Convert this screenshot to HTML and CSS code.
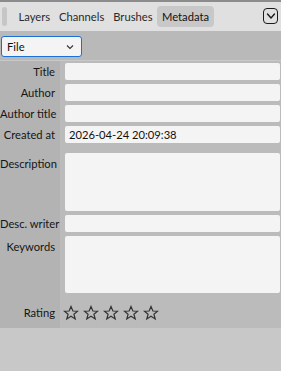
FILE: index.html
```html
<!DOCTYPE html>
<html lang="en">
<head>
<meta charset="UTF-8">
<title>Metadata</title>
<meta name="viewport" content="width=device-width, initial-scale=1.0">
<link rel="stylesheet" href="styles.css">
</head>
<body>

<div class="panel">
  <header class="tabbar">
    <span class="grip"></span>
    <nav class="tabs">
      <span class="tab">Layers</span>
      <span class="tab">Channels</span>
      <span class="tab">Brushes</span>
      <span class="tab active">Metadata</span>
    </nav>
    <button class="menu-btn" aria-label="Menu">
      <svg width="10" height="8" viewBox="0 0 10 8"><path d="M1.5 2 L5 6 L8.5 2" fill="none" stroke="#1a1a1a" stroke-width="1.4" stroke-linecap="round" stroke-linejoin="round"/></svg>
    </button>
  </header>

  <div class="toolbar">
    <div class="select">
      <span>File</span>
      <svg width="8" height="6" viewBox="0 0 8 6"><path d="M1 1.5 L4 4.5 L7 1.5" fill="none" stroke="#333" stroke-width="1.1"/></svg>
    </div>
  </div>

  <main class="fields">
    <label class="lbl">Title</label>
    <div class="cell"><div class="input"></div></div>

    <label class="lbl">Author</label>
    <div class="cell"><div class="input"></div></div>

    <label class="lbl">Author title</label>
    <div class="cell"><div class="input"></div></div>

    <label class="lbl">Created at</label>
    <div class="cell"><div class="input">2026-04-24 20:09:38</div></div>

    <label class="lbl top tall">Description</label>
    <div class="cell tall"><div class="input area"></div></div>

    <label class="lbl">Desc. writer</label>
    <div class="cell"><div class="input"></div></div>

    <label class="lbl top">Keywords</label>
    <div class="cell"><div class="input area kw"></div></div>

    <label class="lbl rating-lbl">Rating</label>
    <div class="cell stars">
      <svg class="star" viewBox="0 0 16 16"><path d="M8 1.5 L9.9 6 L14.6 6.2 L10.9 9.2 L12.2 13.9 L8 11.2 L3.8 13.9 L5.1 9.2 L1.4 6.2 L6.1 6 Z"/></svg>
      <svg class="star" viewBox="0 0 16 16"><path d="M8 1.5 L9.9 6 L14.6 6.2 L10.9 9.2 L12.2 13.9 L8 11.2 L3.8 13.9 L5.1 9.2 L1.4 6.2 L6.1 6 Z"/></svg>
      <svg class="star" viewBox="0 0 16 16"><path d="M8 1.5 L9.9 6 L14.6 6.2 L10.9 9.2 L12.2 13.9 L8 11.2 L3.8 13.9 L5.1 9.2 L1.4 6.2 L6.1 6 Z"/></svg>
      <svg class="star" viewBox="0 0 16 16"><path d="M8 1.5 L9.9 6 L14.6 6.2 L10.9 9.2 L12.2 13.9 L8 11.2 L3.8 13.9 L5.1 9.2 L1.4 6.2 L6.1 6 Z"/></svg>
      <svg class="star" viewBox="0 0 16 16"><path d="M8 1.5 L9.9 6 L14.6 6.2 L10.9 9.2 L12.2 13.9 L8 11.2 L3.8 13.9 L5.1 9.2 L1.4 6.2 L6.1 6 Z"/></svg>
    </div>
  </main>
</div>

</body>
</html>
```

FILE: styles.css
```css
html, body {
  margin: 0;
  padding: 0;
  height: 100%;
}

body {
  font-family: Lato, "Noto Sans", sans-serif;
  font-size: 11.2px;
  color: #1a1a1a;
  background-color: #c8c8c8;
}

.panel {
  border-top: 2px solid #8c8c8c;
}

.tabbar {
  height: 29px;
  background-color: #e0e0e0;
  display: flex;
  align-items: center;
  padding: 0 3px 0 2px;
}

.grip {
  width: 5px;
  height: 19px;
  border-radius: 3px;
  background-color: #c6c6c6;
  margin-right: 7px;
}

.tabs {
  display: flex;
  align-items: center;
  flex: 1;
}

.tab {
  padding: 3px 4.5px;
  line-height: 15px;
  border-radius: 4px;
  color: #2a2a2a;
}

.tab.active {
  background-color: #c8c8c8;
  color: #111;
  padding: 3px 5px;
}

.menu-btn {
  width: 15px;
  height: 16px;
  padding: 0;
  border: 1.5px solid #1a1a1a;
  border-radius: 4px;
  background: transparent;
  display: flex;
  align-items: center;
  justify-content: center;
  margin-top: -2px;
}

.toolbar {
  background-color: #b9b9b9;
  padding: 5px 0 3px 1px;
  border-bottom: 1px solid #c9c9c9;
}

.select {
  height: 19px;
  width: 67px;
  border: 1px solid #1b6fd8;
  border-radius: 3px;
  background-color: #f4f4f4;
  display: flex;
  align-items: center;
  justify-content: space-between;
  padding: 0 7px 0 5px;
  color: #111;
}

.fields {
  display: grid;
  grid-template-columns: 60px 1fr;
  background-color: #bbbbbb;
}

.lbl {
  background-color: #b3b3b3;
  text-align: right;
  padding-right: 5px;
  line-height: 21px;
  white-space: nowrap;
  color: #151515;
}

.lbl.top {
  line-height: 17px;
  padding-top: 4px;
}

.lbl.tall {
  padding-top: 10px;
}

.cell {
  padding: 2px 1px 2px 5px;
}

.cell.tall {
  padding-top: 8px;
}

.input {
  height: 17px;
  background-color: #f4f4f4;
  border-radius: 2px;
  line-height: 17px;
  padding-left: 4px;
  color: #111;
}

.input.area {
  height: 58px;
}

.input.kw {
  height: 57px;
}

.rating-lbl {
  line-height: 31px;
  padding-top: 2px;
}

.stars {
  display: flex;
  gap: 4px;
  padding: 10px 0 5px 3px;
}

.star {
  width: 16px;
  height: 16px;
  fill: none;
  stroke: #333;
  stroke-width: 1.2;
}
```
